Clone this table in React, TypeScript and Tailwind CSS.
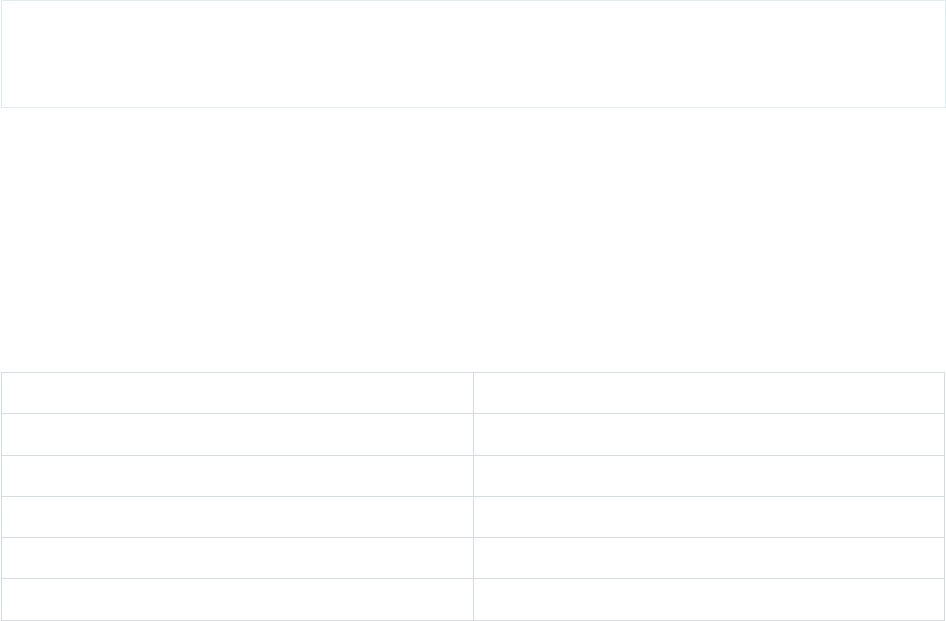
export default function App() {
  const rows = [0, 1, 2, 3, 4, 5];
  return (
    <div className="w-[946px] h-[621px] bg-white font-['Liberation_Sans',sans-serif]">
      {/* header panel */}
      <div className="ml-px h-[108px] border border-[#dcecf3]" />

      {/* spacer */}
      <div className="h-[264px]" />

      {/* empty grid */}
      <table className="ml-px w-[944px] border-collapse table-fixed border border-[#d4dce0]">
        <tbody>
          {rows.map((r) => (
            <tr key={r} className="h-[41.3px]">
              <td className="border border-[#d4dce0] w-1/2" />
              <td className="border border-[#d4dce0] w-1/2" />
            </tr>
          ))}
        </tbody>
      </table>
    </div>
  );
}
